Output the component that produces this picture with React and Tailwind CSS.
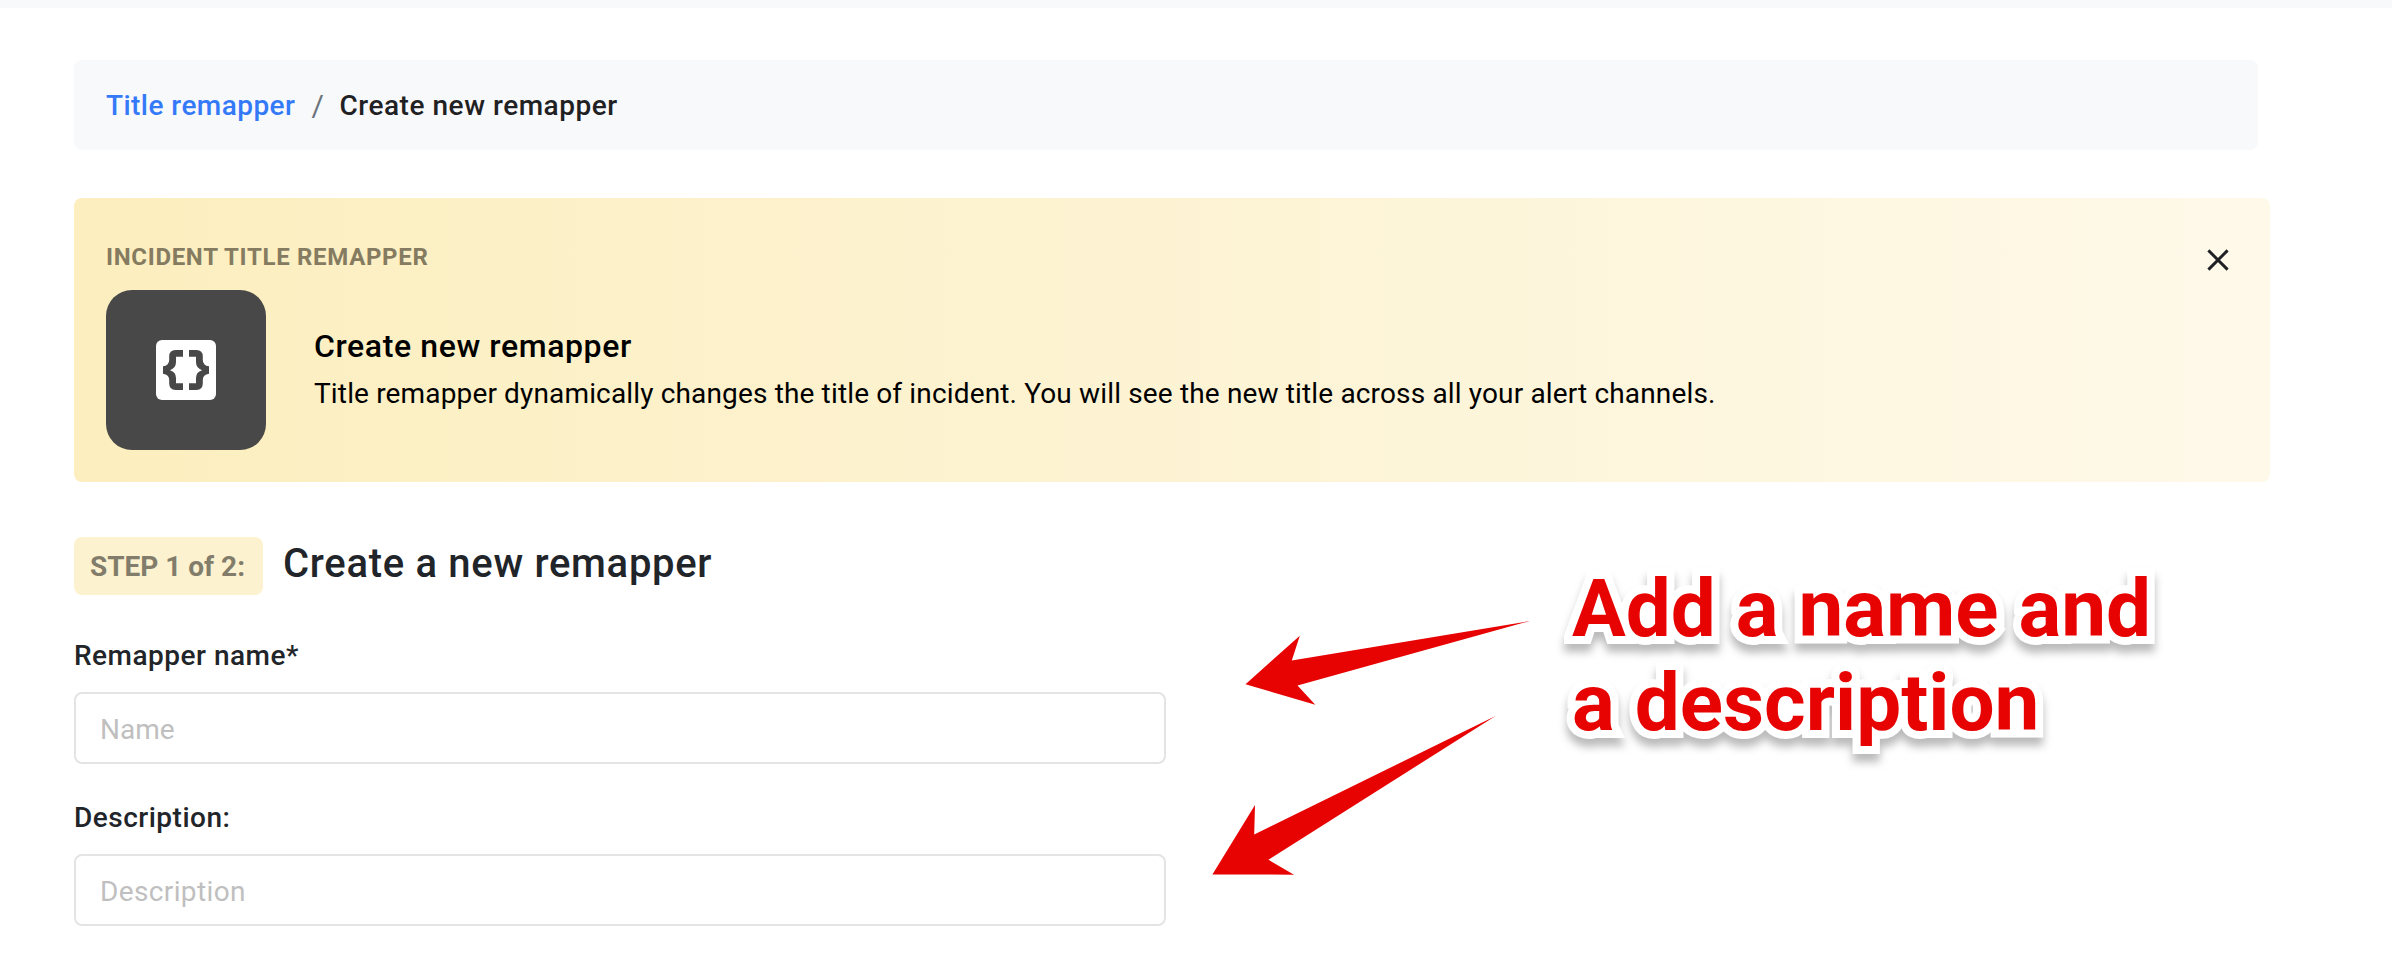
function BracesIcon() {
  const brace =
    'M27 10H19.5Q13.2 10 13.2 16.5V20Q13.2 25.6 7 26.3V33.7Q13.2 34.4 13.2 40V43.5Q13.2 50 19.5 50H27V43.2H20V38Q20 32 14 30.2Q20 28 20 22V16.8H27Z';
  return (
    <svg className="size-[60px]" viewBox="0 0 60 60" aria-hidden="true">
      <rect width="60" height="60" rx="6" fill="#ffffff" />
      <path d={brace} fill="#484848" />
      <path d={brace} fill="#484848" transform="translate(60 0) scale(-1 1)" />
    </svg>
  );
}

function CloseIcon() {
  return (
    <svg className="size-6" viewBox="0 0 24 24" fill="none" stroke="#212125" strokeWidth="2.9" aria-hidden="true">
      <path d="M2.4 2.4 21.6 21.6M21.6 2.4 2.4 21.6" />
    </svg>
  );
}

function Breadcrumb() {
  return (
    <nav className="mt-[52px] flex h-[90px] w-[2184px] items-center rounded-lg bg-[#f8f9fb] px-8 pt-px text-[28px] font-medium">
      <a className="tracking-[0.45px] text-[#347af8]">Title remapper</a>
      <span className="ml-[16px] w-[28px] text-[30px] leading-[42px] font-normal text-[#6c757d]">/</span>
      <span className="tracking-[0.54px] text-[#212123]">Create new remapper</span>
    </nav>
  );
}

function Banner() {
  return (
    <section className="mt-12 flex h-[284px] w-[2196px] justify-between rounded-lg bg-linear-to-r from-[#fceebe] to-[#fef9e9] px-8 pt-8">
      <div>
        <div className="mb-[6px] text-[24px] leading-[54px] font-bold tracking-[0.68px] text-[#857b60]">
          INCIDENT TITLE REMAPPER
        </div>
        <div className="flex items-center gap-12">
          <div className="flex size-40 items-center justify-center rounded-[26px] bg-[#484848]">
            <BracesIcon />
          </div>
          <div className="text-black">
            <h2 className="text-[32px] leading-[47px] font-medium tracking-[0.6px]">Create new remapper</h2>
            <p className="text-[28px] leading-[47px] tracking-[0.15px] whitespace-nowrap">
              Title remapper dynamically changes the title of incident. You will see the new title across all your
              alert channels.
            </p>
          </div>
        </div>
      </div>
      <button type="button" className="mt-[18px] mr-[8px] flex h-6 items-center" aria-label="Close">
        <CloseIcon />
      </button>
    </section>
  );
}

function Field({ label, placeholder, className, tracking }) {
  return (
    <label className={`block ${className}`}>
      <span className="mb-[15px] block text-[28px] leading-[42px] font-medium tracking-[0.5px] text-[#212529]">
        {label}
      </span>
      <input
        type="text"
        placeholder={placeholder}
        className={`block h-[72px] w-[1092px] rounded-lg border-2 border-[#e4e4e4] px-6 pt-[2px] text-[28px] placeholder:text-[#bfbfbf] ${tracking}`}
      />
    </label>
  );
}

function Annotation() {
  return (
    <>
      <svg className="absolute top-[600px] left-[1200px] h-[300px] w-[350px]" viewBox="1200 600 350 300" fill="#e80303" aria-hidden="true">
        <path d="M1245.5 684.2 1299.8 635.7 1291.8 660.5 1530 621 1297.5 685.4 1315.3 704.8Z" />
        <path d="M1212.4 874.4 1255 805 1254.2 834.5 1495.5 716 1268.4 859.7 1294 874.7Z" />
      </svg>
      <div className="absolute top-[562px] left-[1572px] text-[80px] leading-[94px] font-bold whitespace-nowrap text-[#e80303] drop-shadow-[0_8px_4px_rgba(0,0,0,0.27)] [-webkit-text-stroke:16px_white] [paint-order:stroke_fill]">
        <div>Add a name and</div>
        <div>a description</div>
      </div>
    </>
  );
}

export default function App() {
  return (
    <div className="relative h-[960px] w-[2392px] overflow-hidden bg-white font-['Roboto',sans-serif]">
      <div className="h-2 bg-[#f8f9fb]" />
      <main className="pl-[74px]">
        <Breadcrumb />
        <Banner />
        <div className="mt-[55px] flex h-[58px] gap-[20px]">
          <div className="flex w-[189px] items-center justify-center rounded-lg bg-[#fdf2d0] pt-px pr-[2px] text-[28px] font-bold text-[#827d6b]">
            STEP 1 of 2:
          </div>
          <h1 className="text-[40px] leading-[54px] font-medium tracking-[0.7px] text-[#212529]">
            Create a new remapper
          </h1>
        </div>
        <Field label="Remapper name*" placeholder="Name" className="mt-[40px]" tracking="tracking-normal" />
        <Field label="Description:" placeholder="Description" className="mt-[33px]" tracking="tracking-[0.37px]" />
      </main>
      <Annotation />
    </div>
  );
}
